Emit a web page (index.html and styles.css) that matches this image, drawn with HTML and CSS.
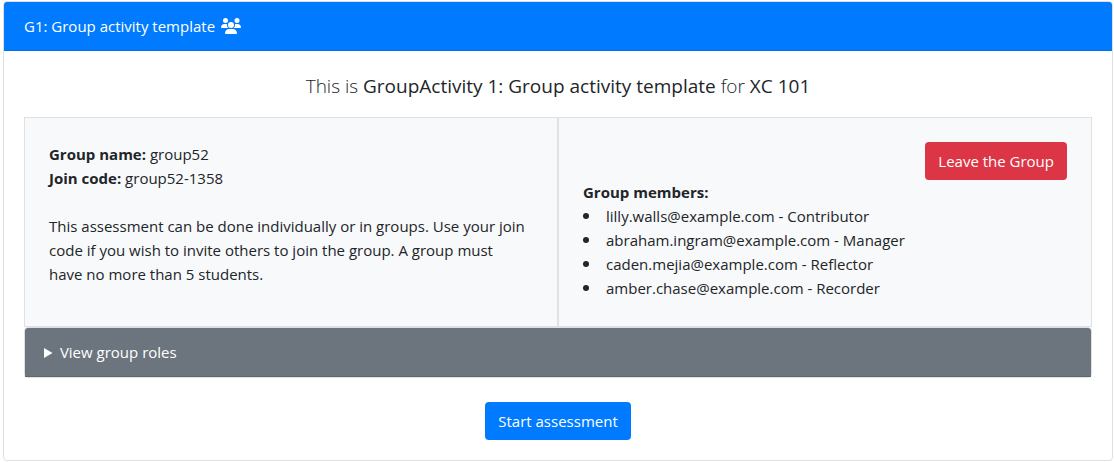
FILE: index.html
```html
<!DOCTYPE html>
<html lang="en">
<head>
<meta charset="utf-8">
<meta name="viewport" content="width=device-width, initial-scale=1">
<title>G1: Group activity template</title>
<link rel="stylesheet" href="styles.css">
</head>
<body>
<main class="card">
  <header class="card-header primary">
    <span>G1: Group activity template</span>
    <svg class="icon-users" viewBox="0 0 640 512" aria-hidden="true"><path d="M144 0a80 80 0 1 1 0 160A80 80 0 1 1 144 0zM512 0a80 80 0 1 1 0 160A80 80 0 1 1 512 0zM0 298.7C0 239.8 47.8 192 106.7 192h42.7c15.9 0 31 3.5 44.6 9.7c-1.3 7.2-1.9 14.7-1.9 22.3c0 38.2 16.8 72.5 43.3 96c-.2 0-.4 0-.7 0H21.3C9.6 320 0 310.4 0 298.7zM405.3 320c-.2 0-.4 0-.7 0c26.6-23.5 43.3-57.8 43.3-96c0-7.6-.7-15-1.9-22.3c13.6-6.3 28.7-9.7 44.6-9.7h42.7C592.2 192 640 239.8 640 298.7c0 11.8-9.6 21.3-21.3 21.3H405.3zM224 224a96 96 0 1 1 192 0 96 96 0 1 1 -192 0zM128 485.3C128 411.7 187.7 352 261.3 352H378.7C452.3 352 512 411.7 512 485.3c0 14.7-11.9 26.7-26.7 26.7H154.7c-14.7 0-26.7-11.9-26.7-26.7z"/></svg>
  </header>
  <div class="card-body">
    <p class="lead">This is <span class="strong">GroupActivity 1: Group activity template</span> for <span class="strong">XC 101</span></p>
    <div class="columns">
      <section class="panel">
        <p><b>Group name:</b> group52</p>
        <p><b>Join code:</b> group52-1358</p>
        <p class="note">This assessment can be done individually or in groups. Use your join code if you wish to invite others to join the group. A group must have no more than 5 students.</p>
      </section>
      <section class="panel">
        <div class="actions"><button type="button" class="btn danger">Leave the Group</button></div>
        <p><b>Group members:</b></p>
        <ul class="members">
          <li>lilly.walls@example.com - Contributor</li>
          <li>abraham.ingram@example.com - Manager</li>
          <li>caden.mejia@example.com - Reflector</li>
          <li>amber.chase@example.com - Recorder</li>
        </ul>
      </section>
    </div>
    <details class="roles">
      <summary>View group roles</summary>
    </details>
    <div class="start"><button type="button" class="btn primary">Start assessment</button></div>
  </div>
</main>
</body>
</html>
```

FILE: styles.css
```css
* {
  box-sizing: border-box;
}

body {
  margin: 1px 1px 1px 3px;
  background: #fff;
  color: #212529;
  font: 15px/24px "Open Sans", "Noto Sans", sans-serif;
}

p {
  margin: 0;
}

.card {
  border: 1px solid #dfdfdf;
  border-radius: 4px;
  overflow: hidden;
}

.card-header {
  display: flex;
  align-items: center;
  gap: 6px;
  padding: 12px 20px;
  border-bottom: 1px solid #0070e0;
}

.primary {
  background: #007bff;
  color: #fff;
}

.danger {
  background: #dc3545;
  color: #fff;
}

.icon-users {
  width: 20px;
  height: 16px;
  fill: currentColor;
}

.card-body {
  padding: 20px;
}

.lead {
  margin-bottom: 16px;
  font-size: 19px;
  line-height: 30px;
  font-weight: 300;
  text-align: center;
}

.strong {
  font-weight: 400;
}

.columns {
  display: grid;
  grid-template-columns: 1fr 1fr;
}

.panel {
  padding: 24px 24px 26px;
  border: 1px solid #dee2e6;
  background: #f8f9fa;
}

.note {
  margin-top: 24px;
  padding-right: 4px;
}

.actions {
  display: flex;
  justify-content: flex-end;
}

.members {
  margin: 0;
  padding: 0;
  list-style: none;
}

.members li {
  display: flex;
  align-items: center;
  gap: 17px;
}

.members li::before {
  content: "";
  width: 6px;
  height: 6px;
  border-radius: 50%;
  background: currentColor;
}

.btn {
  padding: 6px 12px;
  border: 1px solid transparent;
  border-radius: 4px;
  font: inherit;
  cursor: pointer;
}

.roles {
  border: 1px solid #dfdfdf;
  border-radius: 4px;
}

.roles summary {
  padding: 12px 19px;
  border-bottom: 1px solid #5f676e;
  border-radius: 3px 3px 0 0;
  background: #6c757d;
  color: #fff;
  cursor: pointer;
}

.start {
  display: flex;
  justify-content: center;
  margin-top: 24px;
}
```
